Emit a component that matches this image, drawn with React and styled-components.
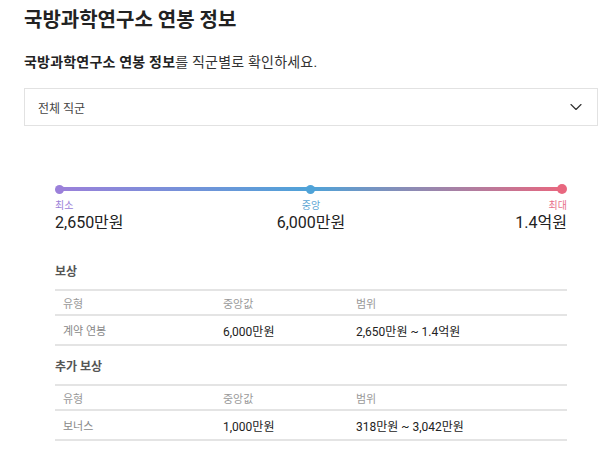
import React from "react";
import styled, { createGlobalStyle } from "styled-components";
import { ChevronDown } from "lucide-react";

const GlobalStyle = createGlobalStyle`
    body {
        margin: 0;
        background: #fff;
        font-family: Roboto, "Noto Sans CJK KR", sans-serif;
        color: #222;
    }
`;

const compensation = [
    { type: "계약 연봉", median: "6,000만원", range: "2,650만원 ~ 1.4억원" },
];

const extra = [
    { type: "보너스", median: "1,000만원", range: "318만원 ~ 3,042만원" },
];

const App = () => {
    return (
        <Page>
            <GlobalStyle />
            <Title>국방과학연구소 연봉 정보</Title>
            <Subtitle>
                <strong>국방과학연구소 연봉 정보</strong>를 직군별로 확인하세요.
            </Subtitle>
            <Select>
                <span>전체 직군</span>
                <ChevronDown size={20} strokeWidth={1.4} color="#333" />
            </Select>
            <Section>
                <Track>
                    <Dot />
                    <Dot />
                    <Dot />
                </Track>
                <Stats>
                    <Stat $align="left">
                        <StatLabel $color="#9a80d8">최소</StatLabel>
                        <StatValue>2,650만원</StatValue>
                    </Stat>
                    <Stat $align="center">
                        <StatLabel $color="#5ea6d4">중앙</StatLabel>
                        <StatValue>6,000만원</StatValue>
                    </Stat>
                    <Stat $align="right">
                        <StatLabel $color="#e8708a">최대</StatLabel>
                        <StatValue>1.4억원</StatValue>
                    </Stat>
                </Stats>
                <Heading $top={30}>보상</Heading>
                <PayTable rows={compensation} />
                <Heading $top={12}>추가 보상</Heading>
                <PayTable rows={extra} />
            </Section>
        </Page>
    );
};

const PayTable = ({ rows }) => (
    <Table>
        <colgroup>
            <col style={{ width: 160 }} />
            <col style={{ width: 133 }} />
            <col />
        </colgroup>
        <thead>
            <tr>
                <Th>유형</Th>
                <Th>중앙값</Th>
                <Th>범위</Th>
            </tr>
        </thead>
        <tbody>
            {rows.map((r) => (
                <tr key={r.type}>
                    <Td $muted>{r.type}</Td>
                    <Td>{r.median}</Td>
                    <Td>{r.range}</Td>
                </tr>
            ))}
        </tbody>
    </Table>
);

const Page = styled.main`
    padding: 6px 10px 0 24px;
`;

const Title = styled.h1`
    margin: 0;
    font-size: 20px;
    line-height: 28px;
    font-weight: 700;
    color: #222;
`;

const Subtitle = styled.p`
    margin: 18px 0 0;
    font-size: 14px;
    line-height: 20px;
    letter-spacing: 0.2px;
    color: #333;

    strong {
        font-weight: 700;
        color: #222;
    }
`;

const Select = styled.div`
    margin-top: 16px;
    height: 36px;
    border: 1px solid #e2e2e2;
    display: flex;
    align-items: center;
    justify-content: space-between;
    padding: 0 11px 0 13px;
    font-size: 12px;
    color: #444;
`;

const Section = styled.section`
    padding: 0 31px;
    margin-top: 57px;
`;

const Track = styled.div`
    position: relative;
    height: 12px;
    margin: 0 4px;
    display: flex;
    align-items: center;
    justify-content: space-between;

    &::before {
        content: "";
        position: absolute;
        left: 0;
        right: 0;
        top: 4px;
        height: 4px;
        background: linear-gradient(90deg, #9b80da 0%, #4fa3d8 50%, #e8677f 100%);
    }
`;

const Dot = styled.span`
    position: relative;
    width: 9px;
    height: 9px;
    border-radius: 50%;
    margin: 0 -4px;
    background: #4fa3d8;

    &:first-child {
        background: #9b80da;
    }
    &:last-child {
        width: 10px;
        height: 10px;
        background: #e8677f;
    }
`;

const Stats = styled.div`
    display: grid;
    grid-template-columns: 1fr 1fr 1fr;
    margin-top: 4px;
`;

const Stat = styled.div`
    text-align: ${(p) => p.$align};
`;

const StatLabel = styled.div`
    font-size: 10px;
    line-height: 14px;
    color: ${(p) => p.$color};
`;

const StatValue = styled.div`
    font-size: 16px;
    line-height: 20px;
    color: #222;
`;

const Heading = styled.h3`
    margin: ${(p) => p.$top}px 0 8px;
    font-size: 12px;
    line-height: 18px;
    font-weight: 700;
    color: #555;
`;

const Table = styled.table`
    width: 100%;
    table-layout: fixed;
    border-collapse: collapse;
    border-top: 2px solid #e4e4e4;
    border-bottom: 2px solid #e4e4e4;
`;

const Th = styled.th`
    text-align: left;
    font-weight: 400;
    font-size: 11px;
    color: #999;
    height: 23px;
    padding: 0 8px;
    border-bottom: 2px solid #e4e4e4;
`;

const Td = styled.td`
    font-size: ${(p) => (p.$muted ? "11px" : "12px")};
    color: ${(p) => (p.$muted ? "#888" : "#222")};
    height: 28px;
    padding: 0 8px;
`;

export default App;
